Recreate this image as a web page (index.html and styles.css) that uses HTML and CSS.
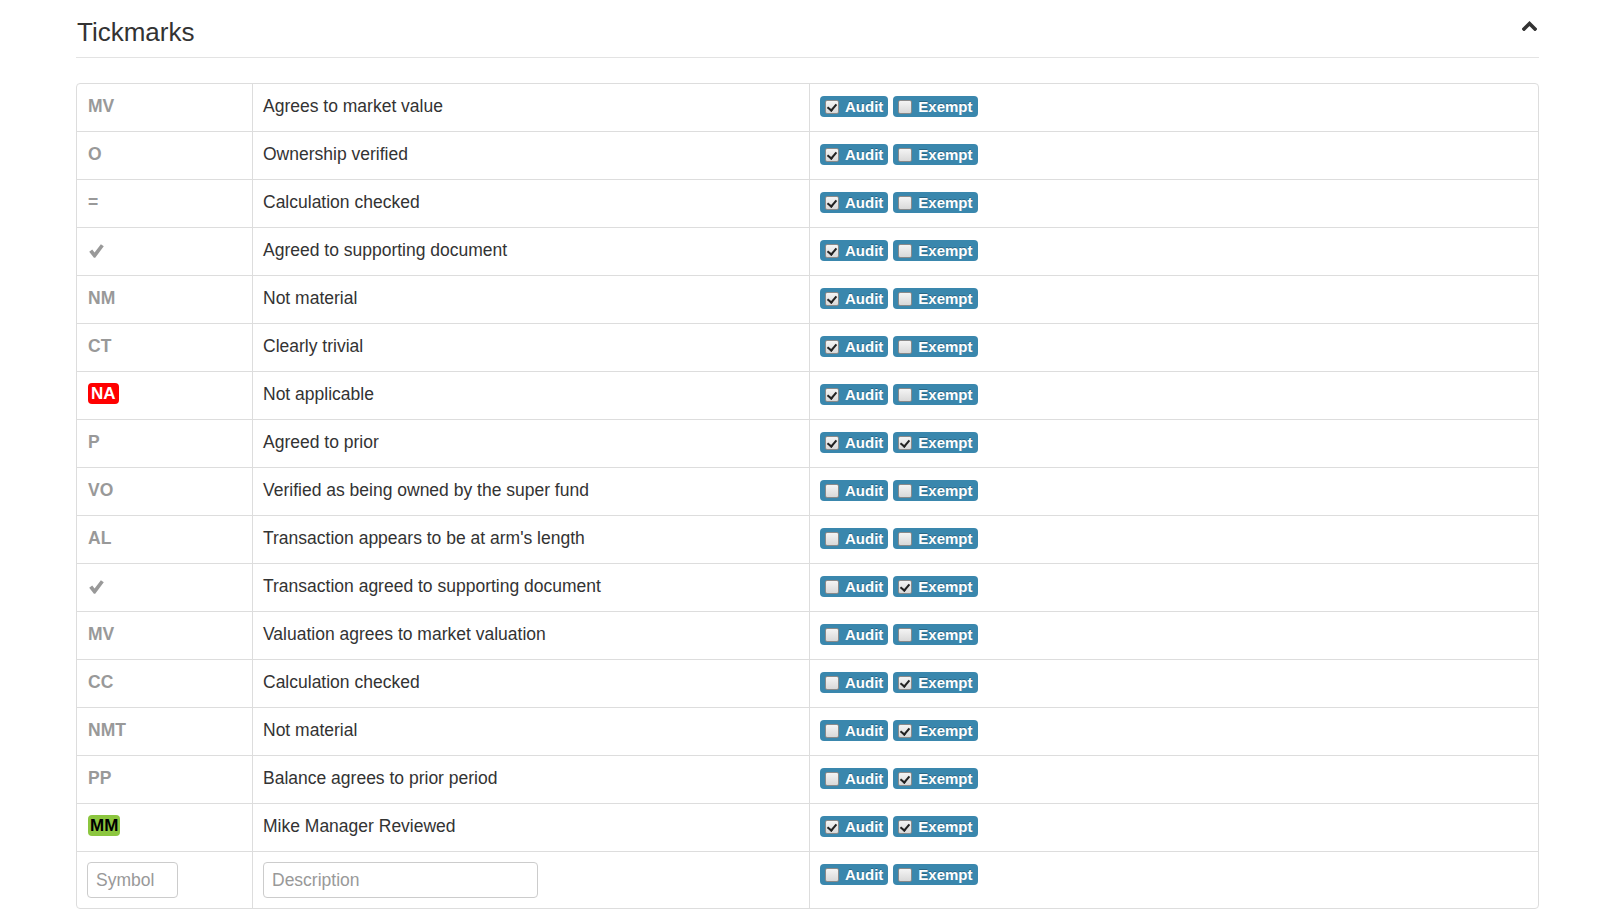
FILE: index.html
```html
<!DOCTYPE html>
<html>
<head>
<meta charset="utf-8">
<link rel="stylesheet" href="styles.css">
</head>
<body>
<div class="panel">
  <div class="head">
    <h3 class="title">Tickmarks</h3>
    <svg class="chev" width="15" height="11" viewBox="0 0 15 11"><path d="M2 9 L7.5 3.5 L13 9" fill="none" stroke="#333" stroke-width="3.6" stroke-linecap="square"/></svg>
  </div>
  <table class="ticks">
    <colgroup><col class="c1"><col class="c2"><col class="c3"></colgroup>
    <tbody>
      <tr><td><span class="sym">MV</span></td><td>Agrees to market value</td><td><div class="btns"><span class="tb"><i class="cb on"></i>Audit</span><span class="tb"><i class="cb"></i>Exempt</span></div></td></tr>
      <tr><td><span class="sym">O</span></td><td>Ownership verified</td><td><div class="btns"><span class="tb"><i class="cb on"></i>Audit</span><span class="tb"><i class="cb"></i>Exempt</span></div></td></tr>
      <tr><td><span class="sym">=</span></td><td>Calculation checked</td><td><div class="btns"><span class="tb"><i class="cb on"></i>Audit</span><span class="tb"><i class="cb"></i>Exempt</span></div></td></tr>
      <tr><td><svg class="tick" width="15" height="14" viewBox="0 0 14 13"><path d="M0.2 7.2 L3.0 5.0 L5.2 7.9 L11.1 0.2 L13.8 2.1 L5.8 12.8 L4.6 12.8 Z" fill="#999"/></svg></td><td>Agreed to supporting document</td><td><div class="btns"><span class="tb"><i class="cb on"></i>Audit</span><span class="tb"><i class="cb"></i>Exempt</span></div></td></tr>
      <tr><td><span class="sym">NM</span></td><td>Not material</td><td><div class="btns"><span class="tb"><i class="cb on"></i>Audit</span><span class="tb"><i class="cb"></i>Exempt</span></div></td></tr>
      <tr><td><span class="sym">CT</span></td><td>Clearly trivial</td><td><div class="btns"><span class="tb"><i class="cb on"></i>Audit</span><span class="tb"><i class="cb"></i>Exempt</span></div></td></tr>
      <tr><td><span class="badge red">NA</span></td><td>Not applicable</td><td><div class="btns"><span class="tb"><i class="cb on"></i>Audit</span><span class="tb"><i class="cb"></i>Exempt</span></div></td></tr>
      <tr><td><span class="sym">P</span></td><td>Agreed to prior</td><td><div class="btns"><span class="tb"><i class="cb on"></i>Audit</span><span class="tb"><i class="cb on"></i>Exempt</span></div></td></tr>
      <tr><td><span class="sym">VO</span></td><td>Verified as being owned by the super fund</td><td><div class="btns"><span class="tb"><i class="cb"></i>Audit</span><span class="tb"><i class="cb"></i>Exempt</span></div></td></tr>
      <tr><td><span class="sym">AL</span></td><td>Transaction appears to be at arm's length</td><td><div class="btns"><span class="tb"><i class="cb"></i>Audit</span><span class="tb"><i class="cb"></i>Exempt</span></div></td></tr>
      <tr><td><svg class="tick" width="15" height="14" viewBox="0 0 14 13"><path d="M0.2 7.2 L3.0 5.0 L5.2 7.9 L11.1 0.2 L13.8 2.1 L5.8 12.8 L4.6 12.8 Z" fill="#999"/></svg></td><td>Transaction agreed to supporting document</td><td><div class="btns"><span class="tb"><i class="cb"></i>Audit</span><span class="tb"><i class="cb on"></i>Exempt</span></div></td></tr>
      <tr><td><span class="sym">MV</span></td><td>Valuation agrees to market valuation</td><td><div class="btns"><span class="tb"><i class="cb"></i>Audit</span><span class="tb"><i class="cb"></i>Exempt</span></div></td></tr>
      <tr><td><span class="sym">CC</span></td><td>Calculation checked</td><td><div class="btns"><span class="tb"><i class="cb"></i>Audit</span><span class="tb"><i class="cb on"></i>Exempt</span></div></td></tr>
      <tr><td><span class="sym">NMT</span></td><td>Not material</td><td><div class="btns"><span class="tb"><i class="cb"></i>Audit</span><span class="tb"><i class="cb on"></i>Exempt</span></div></td></tr>
      <tr><td><span class="sym">PP</span></td><td>Balance agrees to prior period</td><td><div class="btns"><span class="tb"><i class="cb"></i>Audit</span><span class="tb"><i class="cb on"></i>Exempt</span></div></td></tr>
      <tr><td><span class="badge green">MM</span></td><td>Mike Manager Reviewed</td><td><div class="btns"><span class="tb"><i class="cb on"></i>Audit</span><span class="tb"><i class="cb on"></i>Exempt</span></div></td></tr>
      <tr class="new"><td><input class="inp sym-in" type="text" placeholder="Symbol"></td><td><input class="inp desc-in" type="text" placeholder="Description"></td><td><div class="btns"><span class="tb"><i class="cb"></i>Audit</span><span class="tb"><i class="cb"></i>Exempt</span></div></td></tr>
    </tbody>
  </table>
</div>
</body>
</html>
```
FILE: styles.css
```css
html, body {
  margin: 0;
  padding: 0;
  background: #fff;
}
body {
  font-family: "Liberation Sans", Arial, sans-serif;
  color: #333;
  font-size: 17.5px;
}
.panel {
  width: 1463px;
  padding: 17px 0 0 76px;
}
.head {
  display: flex;
  justify-content: space-between;
  align-items: flex-start;
  padding-bottom: 10px;
  border-bottom: 1px solid #e3e3e3;
}
.title {
  margin: 0;
  padding-left: 1px;
  font-size: 26px;
  line-height: 30px;
  font-weight: normal;
  color: #333;
}
.chev {
  margin-top: 3px;
  margin-right: 2px;
  display: block;
}
.ticks {
  margin-top: 25px;
  width: 1463px;
  table-layout: fixed;
  border-collapse: separate;
  border-spacing: 0;
  border: 1px solid #ddd;
  border-radius: 4px;
}
.c1 { width: 175px; }
.c2 { width: 557px; }
.ticks td {
  padding: 11px 10px 13px;
  line-height: 23px;
  vertical-align: top;
  border-top: 1px solid #ddd;
  white-space: nowrap;
}
.ticks tr:first-child td { border-top: 0; }
.ticks td + td { border-left: 1px solid #ddd; }
.ticks tr.new td { padding: 10px 10px 10px; }
.ticks tr.new .btns { padding-top: 2px; }
.sym {
  font-weight: bold;
  color: #999;
  font-size: 17.5px;
  padding-left: 1px;
}
.tick {
  display: inline-block;
  vertical-align: top;
  margin-top: 5px;
  margin-left: 2px;
}
.badge {
  display: inline-block;
  vertical-align: top;
  margin-top: 0;
  margin-left: 1px;
  font-weight: bold;
  font-size: 17px;
  line-height: 21px;
  padding: 0 3px;
  border-radius: 4px;
}
.badge.red { background: #ff0000; color: #fff; }
.badge.green { background: #8cc63f; color: #000; padding: 0 2px; }
.btns {
  display: flex;
  gap: 5px;
  padding-top: 1px;
  height: 21px;
}
.tb {
  display: inline-flex;
  align-items: center;
  gap: 6px;
  height: 21px;
  padding: 0 5px;
  background: #3a87ad;
  border-radius: 4px;
  color: #fff;
  font-weight: bold;
  font-size: 15px;
  line-height: 21px;
  text-shadow: 0 -1px 0 rgba(0,0,0,0.25);
}
.cb {
  display: block;
  width: 12px;
  height: 12px;
  border: 1px solid #8a8a8a;
  border-radius: 2px;
  background: linear-gradient(#f4f4f4, #d9d9d9);
  position: relative;
}
.cb.on::after {
  content: "";
  position: absolute;
  left: 3px;
  top: 1px;
  width: 4px;
  height: 7px;
  border-right: 2.4px solid #222;
  border-bottom: 2.4px solid #222;
  transform: rotate(40deg);
}
.inp {
  box-sizing: border-box;
  height: 36px;
  border: 1px solid #ccc;
  border-radius: 4px;
  padding: 0 8px;
  font-family: "Liberation Sans", Arial, sans-serif;
  font-size: 17.5px;
  color: #555;
  display: block;
  margin: 0;
  outline: none;
}
.inp::placeholder { color: #999; }
.sym-in { width: 91px; }
.desc-in { width: 275px; }
```
